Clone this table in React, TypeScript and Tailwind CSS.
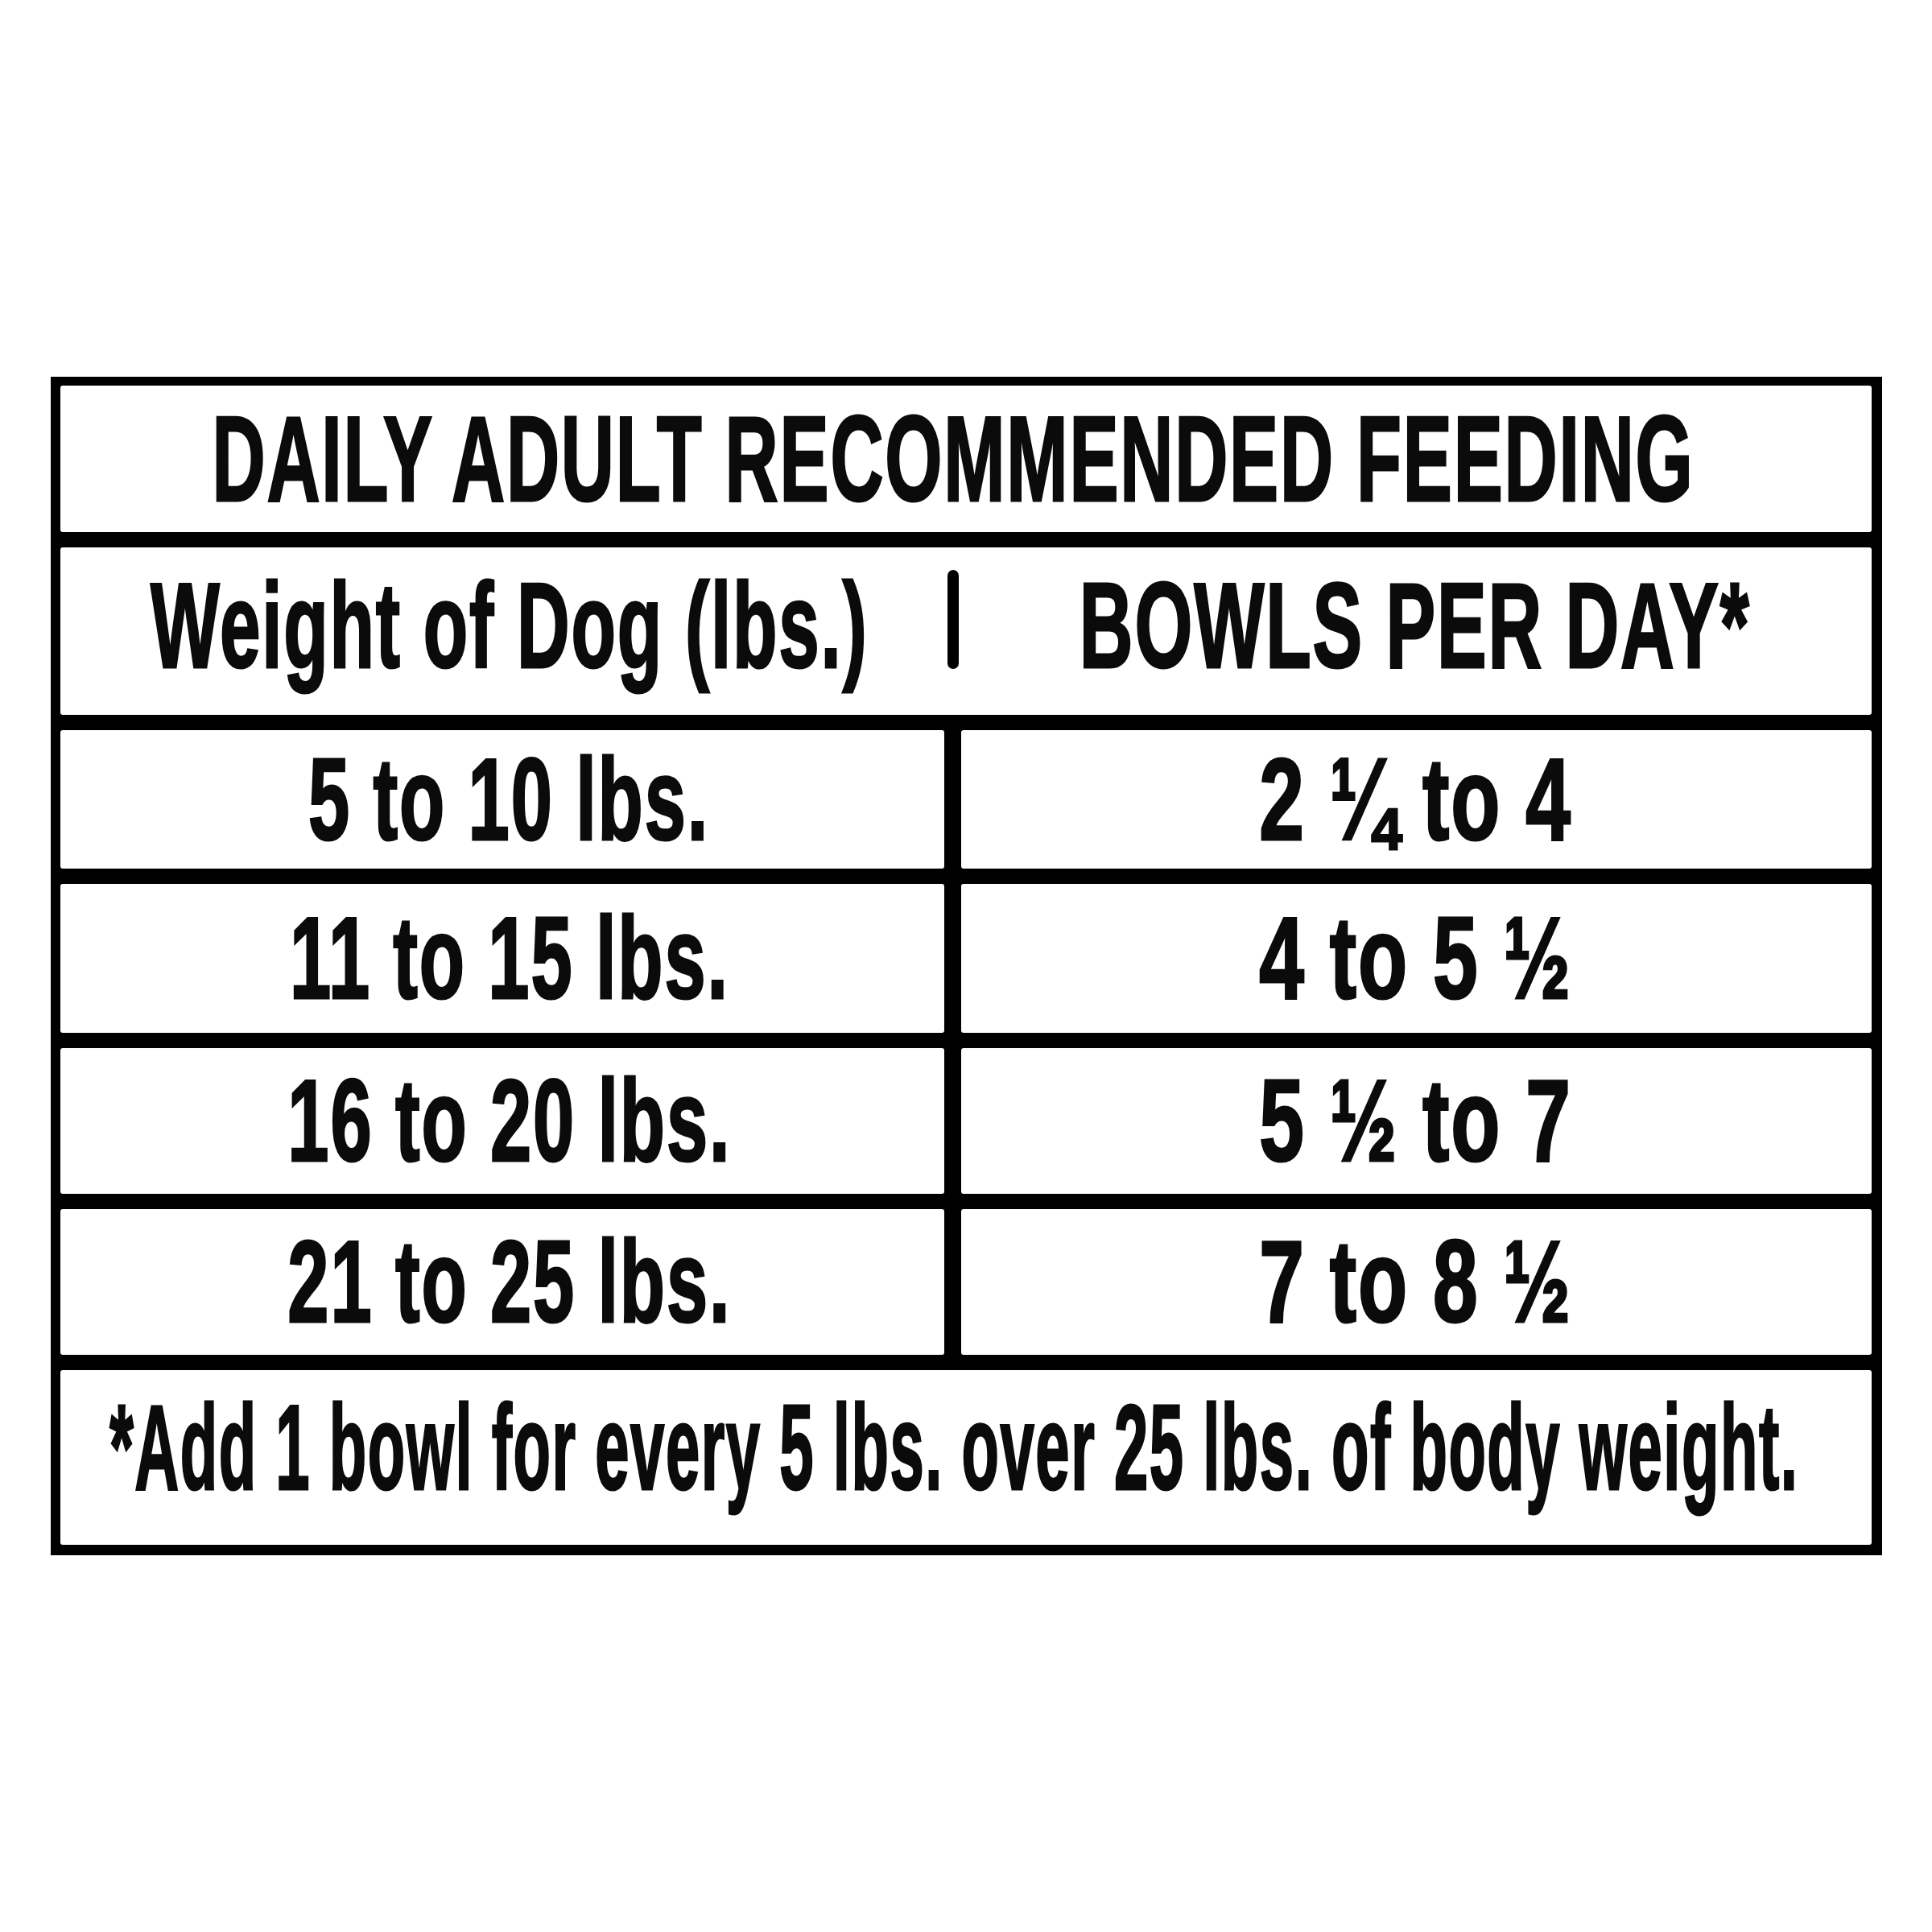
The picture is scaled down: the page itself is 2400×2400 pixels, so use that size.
import React from 'react';

type Row = { weight: string; bowls: string };

const rows: Row[] = [
  { weight: '5 to 10 lbs.', bowls: '2 ¼ to 4' },
  { weight: '11 to 15 lbs.', bowls: '4 to 5 ½' },
  { weight: '16 to 20 lbs.', bowls: '5 ½ to 7' },
  { weight: '21 to 25 lbs.', bowls: '7 to 8 ½' },
];

const rowHeights = ['h-[172px]', 'h-[185px]', 'h-[181px]', 'h-[181px]'];

// condensed look: the label face is far narrower than any installed font
const Label: React.FC<{ children: React.ReactNode; className?: string }> = ({ children, className }) => (
  <span
    className={`inline-block whitespace-nowrap font-['Liberation_Sans',Arial,sans-serif] font-bold leading-none tracking-[0.02em] text-[#0b0b0b] [-webkit-text-stroke:3px_#0b0b0b] origin-center ${className ?? ''}`}
  >
    {children}
  </span>
);

export default function App() {
  return (
    <div className="min-h-[2400px] w-[2400px] bg-white pt-[468px]">
      <div className="mx-auto flex h-[1464px] w-[2275px] flex-col gap-[19px] bg-black pt-[11px] pb-[13px] pl-[12px] pr-[13px]">
        <div className="flex h-[182px] min-w-0 items-center justify-center rounded-[3px] bg-white pr-[30px]">
          <Label className="text-[150px] scale-x-[0.61]">DAILY ADULT RECOMMENDED FEEDING</Label>
        </div>

        <div className="flex h-[208px] rounded-[3px] bg-white">
          <div className="flex w-[1102px] min-w-0 shrink-0 items-center justify-center pl-[14px] pb-[14px]">
            <Label className="text-[150px] scale-x-[0.605]">Weight of Dog (lbs.)</Label>
          </div>
          <div className="mt-[28px] h-[123px] w-[14px] shrink-0 rounded-full bg-black" />
          <div className="flex min-w-0 flex-1 items-center justify-center pb-[14px]">
            <Label className="text-[150px] scale-x-[0.616]">BOWLS PER DAY*</Label>
          </div>
        </div>

        {rows.map((r, i) => (
          <div key={r.weight} className={`flex gap-[21px] ${rowHeights[i]}`}>
            <div className="flex w-[1098px] shrink-0 items-center justify-center rounded-[3px] bg-white pl-[18px]">
              <Label className="text-[145px] scale-x-[0.635]">{r.weight}</Label>
            </div>
            <div className="flex min-w-0 flex-1 items-center justify-center rounded-[3px] bg-white">
              <Label className="text-[145px] scale-x-[0.69]">{r.bowls}</Label>
            </div>
          </div>
        ))}

        <div className="flex min-w-0 flex-1 items-center justify-center rounded-[3px] bg-white pb-[26px] pr-[28px]">
          <Label className="text-[150px] scale-x-[0.507]">*Add 1 bowl for every 5 lbs. over 25 lbs. of body weight.</Label>
        </div>
      </div>
    </div>
  );
}
